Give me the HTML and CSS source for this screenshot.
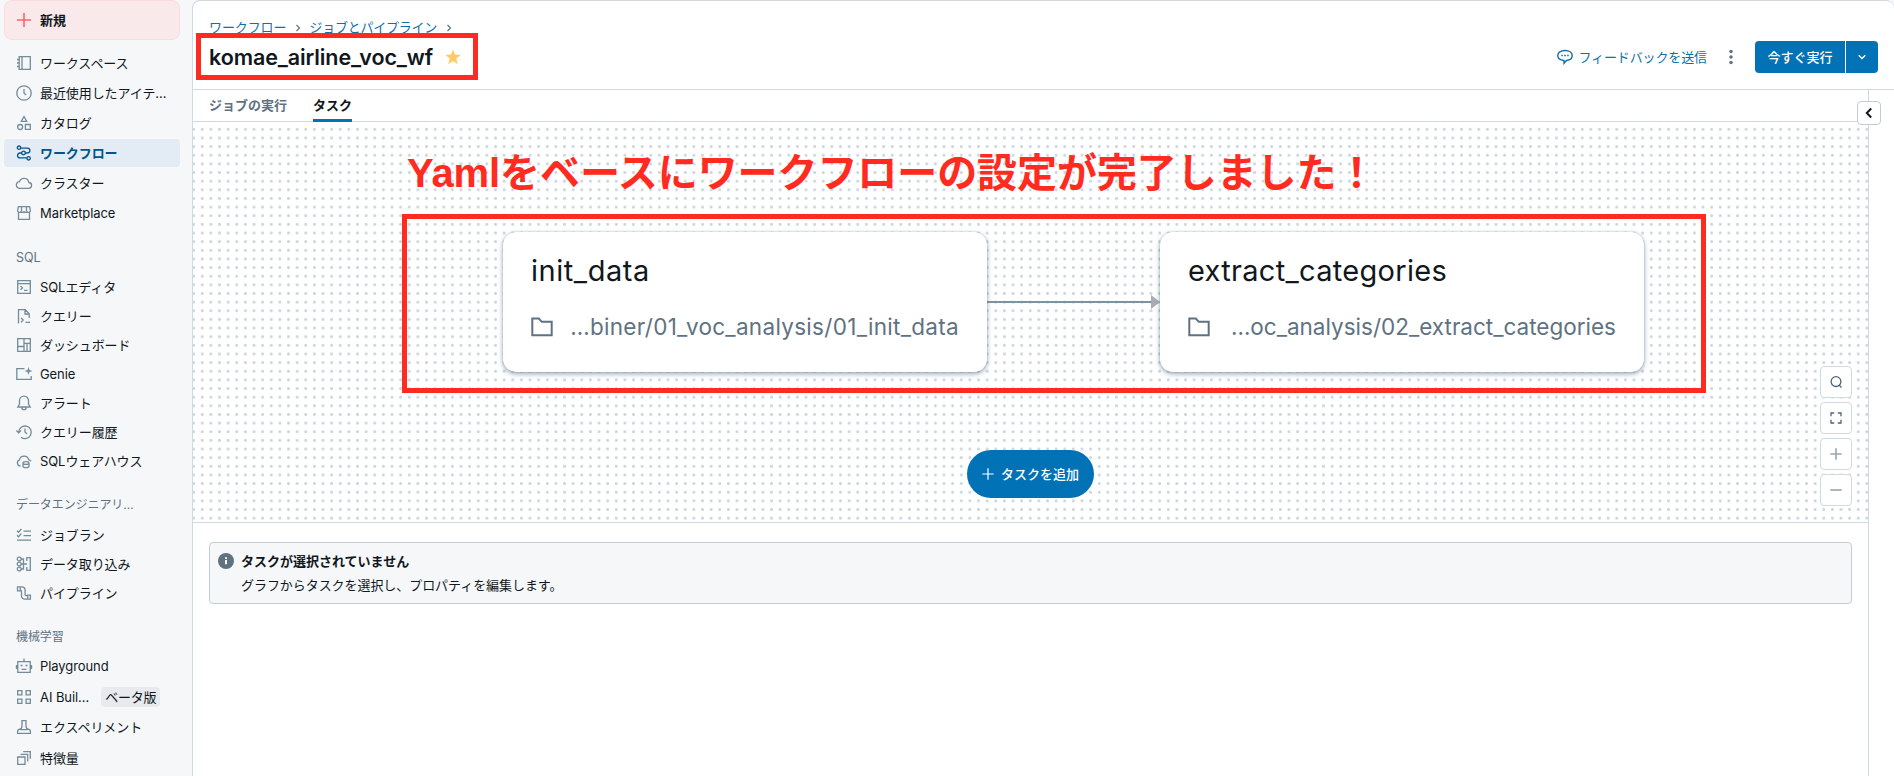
FILE: index.html
```html
<!DOCTYPE html>
<html lang="ja">
<head>
<meta charset="utf-8">
<title>komae_airline_voc_wf</title>
<link rel="stylesheet" href="styles.css">
</head>
<body>
<div class="app">
  <nav class="sidebar">
    <a class="new-btn"><svg class="plus" viewBox="0 0 16 16"><path d="M8 1v14M1 8h14"/></svg>新規</a>
    <ul class="nav nav-top">
      <li><svg class="ico" viewBox="0 0 16 16"><path d="M3.2 1.7h11.1v12.6H3.2zM6 1.7v12.6M1 4.5h2.2M1 8h2.2M1 11.5h2.2"/></svg>ワークスペース</li>
      <li><svg class="ico" viewBox="0 0 16 16"><circle cx="8" cy="8" r="7.2"/><path d="M8 4v4l2 2"/></svg>最近使用したアイテ…</li>
      <li><svg class="ico" viewBox="0 0 16 16"><path d="M8 1.6l2.7 4.7H5.3zM9.4 9.5h4.9v4.9H9.4z"/><circle cx="4.1" cy="12" r="2.5"/></svg>カタログ</li>
      <li class="active"><svg class="ico" viewBox="0 0 16 16"><circle cx="3" cy="2.700" r="1.700"/><circle cx="7.500" cy="8" r="1.800"/><circle cx="12.600" cy="13.300" r="1.700"/><path d="M4.700 3.200h6.800a2.400 2.400 0 0 1 0 4.800H9.300M5.700 8H4a2.400 2.400 0 0 0 0 4.900h6.900"/></svg>ワークフロー</li>
      <li><svg class="ico" viewBox="0 0 16 16"><path d="M3.800 13.300h8.700a2.900 2.900 0 0 0 .3-5.800A4.800 4.800 0 0 0 3.500 6.700a3.300 3.300 0 0 0 .3 6.600z"/></svg>クラスター</li>
      <li><svg class="ico" viewBox="0 0 16 16"><path d="M2.500 1.700h11l1 3.800a2 2 0 0 1-3.500 1.200 2 2 0 0 1-3 0 2 2 0 0 1-3 0A2 2 0 0 1 1.500 5.500zM2.500 7.500v6.800h11V7.500M5.500 6V2M10.500 6V2"/></svg>Marketplace</li>
    </ul>
    <h2 class="sql">SQL</h2>
    <ul class="nav">
      <li><svg class="ico" viewBox="0 0 16 16"><path d="M1.700 1.700h12.600v12.600H1.700zM1.700 4.600h12.600M4.500 7l2 1.900-2 1.900M8 11.300h3.500"/></svg>SQLエディタ</li>
      <li><svg class="ico" viewBox="0 0 16 16"><path d="M2.500 15.500V1.700h6.700l4 4V10M9 1.700V6h4.200M5 10l2.200 2L5 14.200M9.500 14.300h4.500"/></svg>クエリー</li>
      <li><svg class="ico" viewBox="0 0 16 16"><path d="M1.700 1.700h12.600v12.600H1.700zM8 1.700v12.600M1.700 9.500H8M8 6.300h6.300M11 6.300v8"/></svg>ダッシュボード</li>
      <li><svg class="ico" viewBox="0 0 16 16"><path d="M8.500 2.700H.8v10.600h14.400V10"/><path class="solid" d="M12.500 1l1 3 3 1-3 1-1 3-1-3-3-1 3-1z"/></svg>Genie</li>
      <li><svg class="ico" viewBox="0 0 16 16"><path d="M3.500 9V5.600a4.500 4.500 0 0 1 9 0V9l1.700 3H1.800zM5.800 12.500a2.200 2.200 0 0 0 4.400 0"/></svg>アラート</li>
      <li><svg class="ico" viewBox="0 0 16 16"><path d="M2.700 8.500A6.300 6.300 0 1 1 5 13.200M.4 6.500l2.300 2.300L5 6.500M9 4.500V8l2 2"/></svg>クエリー履歴</li>
      <li><svg class="ico" viewBox="0 0 16 16"><path d="M4.500 13a3.200 3.200 0 0 1-1-6.200 4.700 4.700 0 0 1 9.200 0c1 .2 2 .6 2.500 1.500"/><path d="M7 10v3.200c0 1.800 6 1.800 6 0V10c0-1.800-6-1.800-6 0c0 1.800 6 1.800 6 0"/></svg>SQLウェアハウス</li>
    </ul>
    <h2 class="data">データエンジニアリ…</h2>
    <ul class="nav">
      <li><svg class="ico" viewBox="0 0 16 16"><path d="M1 3.800l1.500 1.500L5.300 2M1 8.300l1.500 1.500 2.800-3.300M7.500 4.200H15M7.500 8.600H15M1 13.200h14"/></svg>ジョブラン</li>
      <li><svg class="ico" viewBox="0 0 16 16"><circle cx="3.200" cy="3" r="1.900"/><circle cx="3.200" cy="8" r="1.900"/><circle cx="3.200" cy="13" r="1.900"/><path d="M5 3h2.500v10H5M5 8h6M10.800 5V1.700h3.500v12.600h-3.500V11"/></svg>データ取り込み</li>
      <li><svg class="ico" viewBox="0 0 16 16"><path d="M1.500 1.800h2.700v4H1.500zM4.200 1.800h1.600a3.300 3.300 0 0 1 3.300 3.300v4.300c0 .8.500 1.300 1.300 1.300h1.300M4.200 5.200c.8 0 1.300.5 1.300 1.300v4.400a3.300 3.300 0 0 0 3.300 3.300h2.900M11.700 10.200h2.700v4h-2.700z"/></svg>パイプライン</li>
    </ul>
    <h2>機械学習</h2>
    <ul class="nav nav-ml">
      <li><svg class="ico" viewBox="0 0 16 16"><path d="M1.800 3.700h12.400v10.600H1.800zM8 3.700V.5M.5 7v4M15.500 7v4M5.500 11.300h5M4.500 7.500h2M9.500 7.500h2"/></svg>Playground</li>
      <li><svg class="ico" viewBox="0 0 16 16"><path d="M1.700 1.700h4.200v4.200H1.700zM10.100 1.700h4.200v4.200h-4.200zM1.700 10.100h4.200v4.200H1.700zM10.100 10.100h4.200v4.200h-4.200z"/></svg>AI Buil…<span class="tag">ベータ版</span></li>
      <li><svg class="ico" viewBox="0 0 16 16"><path d="M5.300 1.700h5.400M6 1.700V7c0 2-1.500 3.200-3 3.500-1 .2-1.400.8-1.400 1.700v2.100h12.800v-2.100c0-.9-.4-1.500-1.400-1.700-1.500-.3-3-1.500-3-3.500V1.700M4.500 10.700h7"/></svg>エクスペリメント</li>
      <li><svg class="ico" viewBox="0 0 16 16"><path d="M1.700 7h7.300v7.300H1.700zM4.500 4.300h7.200v7.200M7.200 1.700h7.100v7.100"/></svg>特徴量</li>
    </ul>
  </nav>

  <main class="main">
    <header class="header">
      <div class="titles">
        <div class="crumbs"><a>ワークフロー</a><svg class="sep" viewBox="0 0 6 8"><path d="M1.500 1l3 3-3 3"/></svg><a class="jobs">ジョブとパイプライン</a><svg class="sep" viewBox="0 0 6 8"><path d="M1.500 1l3 3-3 3"/></svg></div>
        <div class="title-row">
          <h1>komae_airline_voc_wf</h1>
          <svg class="star" viewBox="0 0 16 16"><path d="M8 .3l2 5.300 5.700.3-4.400 3.600 1.500 5.700L8 12l-4.800 3.200 1.500-5.700L.3 5.900 6 5.600z"/></svg>
        </div>
      </div>
      <div class="actions">
        <a class="feedback"><svg viewBox="0 0 16 16"><path d="M8 1.500c4.200 0 7.200 2 7.200 5s-2.600 4.700-5.700 5L7 14.300v-2.800C3.500 11.200.8 9.500.8 6.500s3-5 7.200-5z"/><path d="M4.300 6.500h1.500M7.200 6.500h1.600M10.200 6.500h1.500"/></svg>フィードバックを送信</a>
        <svg class="kebab" viewBox="0 0 4 16"><circle cx="2" cy="2.600" r="1.750"/><circle cx="2" cy="8" r="1.750"/><circle cx="2" cy="13.400" r="1.750"/></svg>
        <div class="run"><span class="run-main">今すぐ実行</span><span class="run-more"><svg viewBox="0 0 10 8"><path d="M1.700 2.300L5 5.600l3.300-3.300"/></svg></span></div>
      </div>
    </header>

    <div class="body">
      <section class="content">
        <div class="tabs"><a class="tab">ジョブの実行</a><a class="tab current">タスク</a></div>
        <div class="canvas">
          <div class="node node-init">
            <div class="node-name">init_data</div>
            <div class="node-path"><svg viewBox="0 0 22 20"><path d="M1.300 1.500h6.500l3 3.300h9.900v13.500H1.300z"/></svg><span>…biner/01_voc_analysis/01_init_data</span></div>
          </div>
          <svg class="edge" viewBox="0 0 173 16"><path class="line" d="M0 8h165"/><path class="head" d="M164 1l9 7-9 7z"/></svg>
          <div class="node node-extract">
            <div class="node-name">extract_categories</div>
            <div class="node-path"><svg viewBox="0 0 22 20"><path d="M1.300 1.500h6.500l3 3.300h9.900v13.500H1.300z"/></svg><span>…oc_analysis/02_extract_categories</span></div>
          </div>
          <a class="add"><svg viewBox="0 0 12 12"><path d="M6 .3v11.400M.3 6h11.400"/></svg>タスクを追加</a>
          <div class="zoom">
            <span><svg viewBox="0 0 12 12"><circle cx="6" cy="5.600" r="4.900"/><path d="M9 9l2.500 2.500"/></svg></span>
            <span><svg viewBox="0 0 12 12"><path d="M1 4.200V1h3.200M7.800 1H11v3.200M11 7.800V11H7.800M4.200 11H1V7.800"/></svg></span>
            <span class="soft"><svg viewBox="0 0 12 12"><path d="M6 .3v11.400M.3 6h11.400"/></svg></span>
            <span class="soft"><svg viewBox="0 0 12 12"><path d="M.3 6h11.400"/></svg></span>
          </div>
          <p class="note">Yamlをベースにワークフローの設定が完了しました！</p>
          <div class="mark mark-graph"></div>
        </div>
        <div class="alert">
          <svg viewBox="0 0 16 16"><circle cx="8" cy="8" r="8"/><path d="M7 7h2v4.300H7zM7 4.200h2v1.700H7z"/></svg>
          <div><strong>タスクが選択されていません</strong><p>グラフからタスクを選択し、プロパティを編集します。</p></div>
        </div>
      </section>
      <aside class="panel"><button class="collapse"><svg viewBox="0 0 8 12"><path d="M6.200 1.500L1.800 6l4.400 4.500"/></svg></button></aside>
    </div>
    <div class="mark mark-title"></div>
  </main>
</div>
</body>
</html>
```
FILE: styles.css
```css
* { box-sizing: border-box; }
body {
  margin: 0;
  background: #f6f7f9;
  color: #11171c;
  font: 13px/20px Inter, "Noto Sans CJK JP", sans-serif;
}
svg { display: block; flex: none; fill: none; }
.app { display: flex; width: 100%; height: 776px; overflow: hidden; }

.sidebar { width: 192px; flex: none; padding: 0 12px 0 4px; white-space: nowrap; overflow: hidden; letter-spacing: -.08px; }
.new-btn {
  display: flex; align-items: center; gap: 8px; height: 40px; padding: 0 0 1px 11px;
  border: 1px solid #fbdadd; border-radius: 8px; background: #f9e9ea; font-weight: 600;
}
.plus { width: 16px; height: 16px; stroke: #ff6069; stroke-width: 1.6; }
.nav { list-style: none; margin: 0; padding: 0; }
.nav li { display: flex; align-items: center; gap: 8px; height: 29px; padding-left: 12px; }
.nav-top { padding-top: 9px; display: grid; gap: 2px; }
.nav-top li { height: 28px; border-radius: 4px; }
.nav-ml li { height: 30.5px; }
.ico { width: 16px; height: 16px; stroke: #748b99; stroke-width: 1.3; overflow: visible; }
.solid { fill: #748b99; stroke: none; }
.nav .active { background: #e3ecf4; color: #04548c; font-weight: 600; }
.active .ico { stroke: #04548c; }
.sidebar h2 { margin: 20px 0 4px 12px; font-size: 12px; line-height: 20px; font-weight: 400; color: #5f7281; }
.sidebar .sql { margin-top: 21px; font-size: 12.5px; }
.sidebar .data { margin-bottom: 5px; }
.tag { margin-left: 4px; padding: 0 4px; border-radius: 4px; background: #e8eaee; line-height: 20px; letter-spacing: -.2px; }

.main {
  position: relative; flex: 1; display: flex; flex-direction: column; min-width: 0;
  background: #fff; border: 1px solid #d1d9e1; border-right: 0; border-bottom: 0; border-radius: 8px 8px 0 0;
}
.header { display: flex; justify-content: space-between; height: 89px; padding: 16px 16px 0; border-bottom: 1px solid #d1d9e1; }
.crumbs { display: flex; align-items: center; height: 20px; color: #0e70a9; letter-spacing: -.1px; }
.jobs { letter-spacing: -.25px; }
.sep { width: 6px; height: 8px; margin: 2px 8px 0 9px; stroke: #5f7281; stroke-width: 1.2; }
.title-row { display: flex; align-items: center; gap: 12px; height: 40px; }
h1 { margin: 0; font-size: 21.5px; line-height: 28px; font-weight: 600; letter-spacing: -.1px; }
.star { width: 16px; height: 16px; fill: #ffcb66; }
.actions { display: flex; align-items: center; height: 32px; margin-top: 24px; }
.feedback { display: flex; align-items: center; gap: 5px; color: #0e70a9; letter-spacing: -.12px; }
.feedback svg { width: 16px; height: 16px; stroke: #0e70a9; stroke-width: 1.4; }
.kebab { width: 4px; height: 16px; margin: 0 22px; fill: #5f7281; }
.run { display: flex; width: 123px; height: 32px; border-radius: 4px; overflow: hidden; background: #0072b5; color: #fff; line-height: 32px; font-weight: 500; }
.run-main { flex: 1; text-align: center; }
.run-more { display: grid; place-items: center; width: 33px; border-left: 1px solid #fff; }
.run-more svg { width: 10px; height: 8px; stroke: #fff; stroke-width: 1.4; }

.body { flex: 1; display: flex; min-height: 0; }
.content { flex: 1; min-width: 0; }
.tabs { display: flex; gap: 26px; height: 32px; padding-left: 16px; border-bottom: 1px solid #d1d9e1; }
.tab { height: 32px; line-height: 30px; font-weight: 600; color: #5f7281; }
.current { color: #11171c; border-bottom: 3px solid #0072b5; }
.canvas {
  position: relative; height: 401px; border-bottom: 1px solid #d1d9e1;
  background: radial-gradient(circle, #cbd6df 1.2px, transparent 1.7px) -3.7px 3px / 8.64px 8.645px;
}
.node {
  position: absolute; top: 110px; width: 484px; height: 140px; padding: 19px 28px; border-radius: 13px; background: #fff;
  box-shadow: 0 2px 5px rgba(60, 90, 115, .5), 0 0 2px rgba(60, 90, 115, .3); white-space: nowrap;
}
.node-init { left: 310px; }
.node-extract { left: 967px; }
.node-name { height: 40px; font-size: 29px; line-height: 40px; letter-spacing: .3px; }
.node-init .node-name { letter-spacing: .55px; }
.node-path { display: flex; justify-content: space-between; align-items: center; height: 32px; margin-top: 20px; font-size: 22.5px; color: #5f7281; }
.node-init .node-path { letter-spacing: .3px; }
.node-path svg { width: 22px; height: 20px; stroke: #5f7281; stroke-width: 2; }
.edge { position: absolute; left: 794px; top: 172px; width: 173px; height: 16px; }
.line { stroke: #7a92a1; stroke-width: 2; }
.head { fill: #a9abb4; }
.add {
  position: absolute; left: 774px; top: 328px; display: flex; align-items: center; justify-content: center; gap: 7px;
  width: 127px; height: 48px; border-radius: 24px; background: #0072b5; color: #fff; font-weight: 500;
}
.add svg { width: 12px; height: 12px; stroke: #fff; stroke-width: 1.2; }
.zoom { position: absolute; left: 1627px; top: 244px; display: grid; gap: 4px; }
.zoom span { display: grid; place-items: center; width: 32px; height: 32px; border: 1px solid #d1d9e1; border-radius: 4px; background: #fff; }
.zoom svg { width: 12px; height: 12px; stroke: #4f6677; stroke-width: 1.3; overflow: visible; }
.zoom .soft svg { stroke: #97a5b0; stroke-width: 1.6; }
.note {
  position: absolute; left: 214px; top: 22px; margin: 0; color: #ff2b20; white-space: nowrap;
  font: 700 40px/58px "Liberation Sans", "Noto Sans CJK JP", sans-serif; letter-spacing: -.08px;
}
.mark { position: absolute; border: 5px solid #ff2b20; }
.mark-graph { left: 209px; top: 92px; width: 1304px; height: 179px; }
.mark-title { left: 3px; top: 32px; width: 282px; height: 47px; }

.alert { display: flex; gap: 7px; height: 62px; margin: 19px 16px 0; padding: 8px; border: 1px solid #c0cdd8; border-radius: 4px; background: #f6f7f9; }
.alert svg { width: 16px; height: 16px; margin-top: 2px; fill: #5f7281; }
.alert svg path { fill: #f6f7f9; }
.alert strong { display: block; font-weight: 600; line-height: 20px; }
.alert p { margin: 4px 0 0; line-height: 20px; letter-spacing: -.06px; }
.panel { position: relative; width: 26px; border-left: 1px solid #d1d9e1; }
.collapse { position: absolute; left: -12px; top: 11px; display: grid; place-items: center; width: 24px; height: 24px; padding: 0; border: 1px solid #c0cdd8; border-radius: 4px; background: #fff; }
.collapse svg { width: 8px; height: 12px; stroke: #11171c; stroke-width: 2; }
```
